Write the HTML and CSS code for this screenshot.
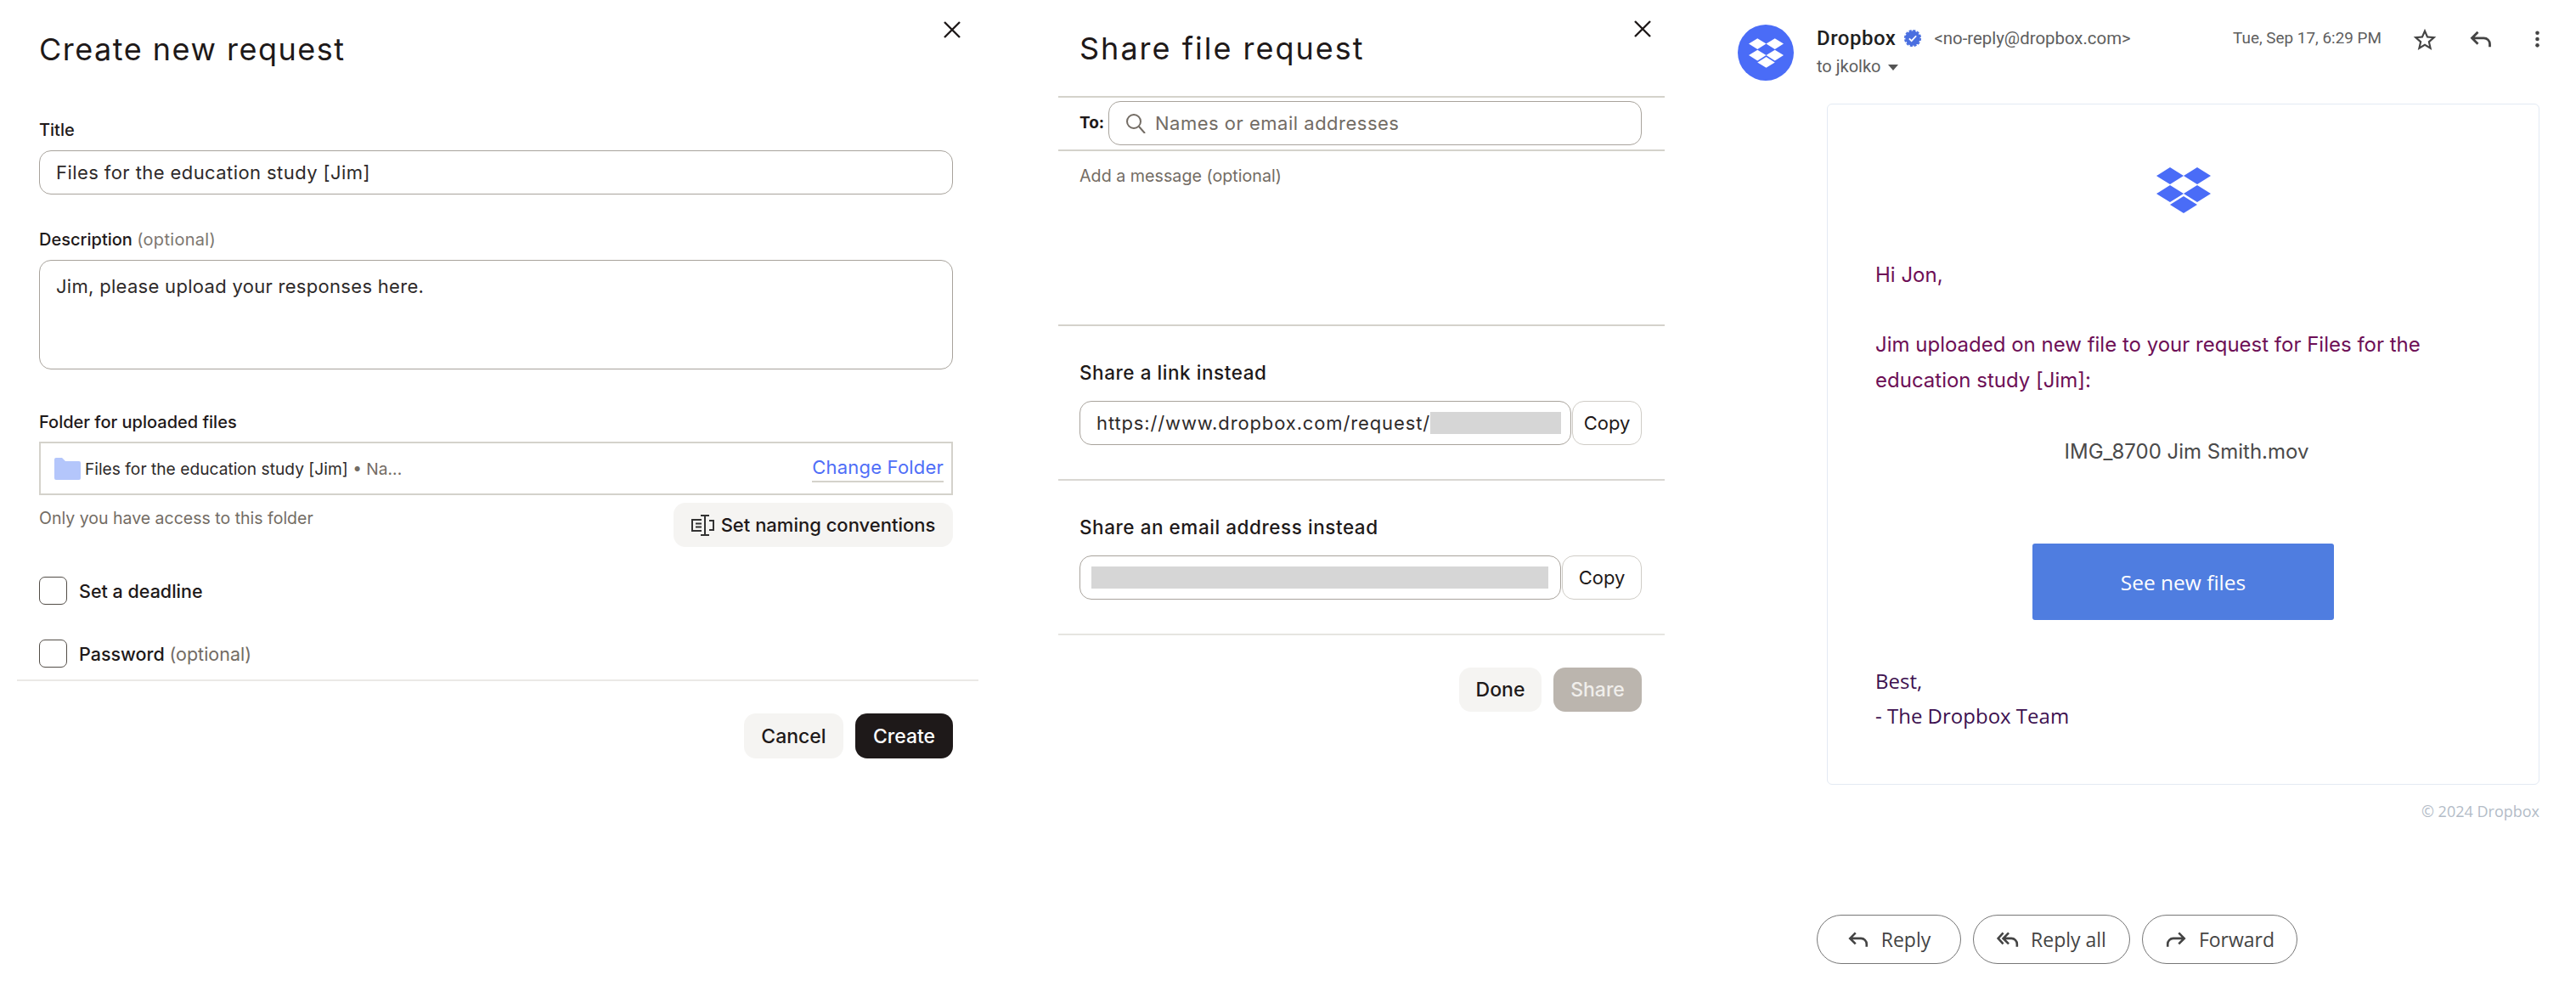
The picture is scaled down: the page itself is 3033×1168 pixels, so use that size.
FILE: index.html

```html
<!DOCTYPE html>
<html lang="en">
<head>
    <meta charset="UTF-8">
    <title>Dropbox file request</title>
    <link rel="stylesheet" href="styles.css">
</head>
<body>
    <div class="page">
        <!-- create request dialog -->
        <section class="create">
            <svg class="close close-create" viewBox="0 0 20 20"><path d="M1 1 19 19M19 1 1 19"/></svg>
            <h2 class="dialog-title">Create new request</h2>

            <div class="label label-title">Title</div>
            <div class="box box-title">Files for the education study [Jim]</div>

            <div class="label label-desc">Description <span class="opt">(optional)</span></div>
            <div class="box box-desc">Jim, please upload your responses here.</div>

            <div class="label label-folder">Folder for uploaded files</div>
            <div class="folder">
                <svg class="folder-icon" viewBox="0 0 31 26"><path d="M0 2a2 2 0 0 1 2-2h7l4 4h16a2 2 0 0 1 2 2v18a2 2 0 0 1-2 2H2a2 2 0 0 1-2-2z"/></svg>
                <span class="folder-name">Files for the education study [Jim] <span class="folder-path">• Na...</span></span>
                <span class="change">Change Folder</span>
            </div>
            <div class="folder-row">
                <span class="hint">Only you have access to this folder</span>
                <div class="btn btn-naming">
                    <svg class="naming-icon" viewBox="0 0 27 25"><path d="M12 6H1v13h11M5 10.500h7M5 14.500h7M11 1h10M11 24h10M16 1v23M21 7h5v11h-5"/></svg>
                    Set naming conventions
                </div>
            </div>
            <div class="check check-first"><span class="tick"></span>Set a deadline</div>
            <div class="check check-second"><span class="tick"></span><span>Password <span class="opt-dark">(optional)</span></span></div>
            <div class="rule-create"></div>
            <div class="actions actions-create">
                <div class="btn btn-soft btn-cancel">Cancel</div>
                <div class="btn btn-dark">Create</div>
            </div>
        </section>

        <!-- share dialog -->
        <section class="share">
            <svg class="close close-share" viewBox="0 0 20 20"><path d="M1 1 19 19M19 1 1 19"/></svg>
            <h2 class="dialog-title share-title">Share file request</h2>
            <div class="to-row">
                <span class="to">To:</span>
                <div class="to-input">
                    <svg class="search" viewBox="0 0 24 24"><circle cx="10" cy="10" r="8"/><path d="M16 16l7 8"/></svg>
                    Names or email addresses
                </div>
            </div>
            <div class="message">Add a message (optional)</div>
            <div class="share-block">
                <div class="share-head">Share a link instead</div>
                <div class="copy-row">
                    <div class="copy-field copy-link">https://www.dropbox.com/request/<span class="redact redact-link"></span></div>
                    <div class="copy-btn copy-btn-link">Copy</div>
                </div>
            </div>
            <div class="share-block share-block-last">
                <div class="share-head">Share an email address instead</div>
                <div class="copy-row">
                    <div class="copy-field copy-mail"><span class="redact redact-mail"></span></div>
                    <div class="copy-btn copy-btn-mail">Copy</div>
                </div>
            </div>
            <div class="actions actions-share">
                <div class="btn btn-soft btn-done">Done</div>
                <div class="btn btn-off">Share</div>
            </div>
        </section>

        <!-- notification email -->
        <section class="mail">
            <div class="mail-head">
                <div class="avatar">
                    <svg class="avatar-logo" viewBox="0 0 64 54"><path d="M0 10 16 0l16 10-16 10zM32 10 48 0l16 10-16 10zM0 31l16-10 16 10-16 10zM32 31l16-10 16 10-16 10z"/><path class="avatar-foot" d="M16 44l16-10 16 10-16 10z"/></svg>
                </div>
                <div class="meta">
                    <div class="meta-top">
                        <span class="sender">Dropbox</span>
                        <svg class="badge" viewBox="0 0 24 24"><circle class="badge-fill" cx="12" cy="12" r="9.500"/><circle class="badge-edge" cx="12" cy="12" r="10" stroke-dasharray="3.400 1.840"/><path class="badge-check" d="M7.500 12.500l3 3 6-6.500"/></svg>
                        <span class="address">&lt;no-reply@dropbox.com&gt;</span>
                    </div>
                    <div class="meta-to">to jkolko <span class="caret"></span></div>
                </div>
                <div class="tools">
                    <span class="date">Tue, Sep 17, 6:29 PM</span>
                    <svg class="tool tool-star" viewBox="0 0 24 24"><path d="M22 9.240l-7.190-.62L12 2 9.190 8.630 2 9.240l5.460 4.730L5.820 21 12 17.270 18.180 21l-1.630-7.030L22 9.240zM12 15.400l-3.760 2.270 1-4.280-3.320-2.880 4.380-.38L12 6.100l1.710 4.040 4.380.38-3.320 2.880 1 4.280L12 15.400z"/></svg>
                    <svg class="tool tool-reply line-icon" viewBox="0 0 24 24"><path d="M9 5 3 11l6 6M3 11h12a6 6 0 0 1 6 6v3"/></svg>
                    <svg class="tool tool-more" viewBox="0 0 6 24"><circle cx="3" cy="4" r="2.500"/><circle cx="3" cy="12" r="2.500"/><circle cx="3" cy="20" r="2.500"/></svg>
                </div>
            </div>

            <div class="card">
                <svg class="card-logo" viewBox="0 0 64 54"><path d="M0 10 16 0l16 10-16 10zM32 10 48 0l16 10-16 10zM0 31l16-10 16 10-16 10zM32 31l16-10 16 10-16 10z"/><path class="logo-foot" d="M16 44l16-10 16 10-16 10z"/></svg>
                <p class="mail-text hi">Hi Jon,</p>
                <p class="mail-text body-text">Jim uploaded on new file to your request for Files for the education study [Jim]:</p>
                <p class="file-name">IMG_8700 Jim Smith.mov</p>
                <div class="cta">See new files</div>
                <p class="sign">Best,<br>- The Dropbox Team</p>
            </div>
            <div class="copyright">© 2024 Dropbox</div>

            <div class="replies">
                <div class="reply reply-one">
                    <svg class="reply-icon line-icon" viewBox="0 0 24 24"><path d="M9 5 3 11l6 6M3 11h12a6 6 0 0 1 6 6v3"/></svg>
                    Reply
                </div>
                <div class="reply reply-all">
                    <svg class="reply-icon line-icon" viewBox="0 0 24 24"><path d="M7 5 1.500 11 7 17M13 5l-6 6 6 6M7 11h9a6 6 0 0 1 6 6v3"/></svg>
                    Reply all
                </div>
                <div class="reply reply-fwd">
                    <svg class="reply-icon line-icon" viewBox="0 0 24 24"><path d="M15 5l6 6-6 6M21 11H9a6 6 0 0 0-6 6v3"/></svg>
                    Forward
                </div>
            </div>
        </section>
    </div>
</body>
</html>
```

FILE: styles.css

```css
* {
    box-sizing: border-box;
}
body {
    margin: 0;
    background: #fff;
    color: #1e1919;
    font-family: 'Inter', sans-serif;
}
p, h2 {
    margin: 0;
}
.page {
    display: flex;
    width: 3033px;
    height: 1168px;
    overflow: hidden;
}

/* shared dialog parts */
.dialog-title {
    font-size: 36px;
    line-height: 44px;
    font-weight: 400;
    letter-spacing: 1.5px;
}
.close {
    position: absolute;
    width: 20px;
    height: 20px;
    fill: none;
    stroke: #1e1919;
    stroke-width: 2.4;
}
.btn {
    display: flex;
    align-items: center;
    justify-content: center;
    font-size: 23px;
    font-weight: 500;
    border-radius: 14px;
}
.btn-soft {
    background: #f5f4f2;
}
.actions {
    display: flex;
    justify-content: flex-end;
}

/* left dialog */
.create {
    position: relative;
    width: 1246px;
    padding: 36px 124px 0 46px;
}
.close-create {
    left: 1111px;
    top: 25px;
}
.label {
    font-size: 20px;
    line-height: 20px;
    font-weight: 500;
}
.label-title {
    margin-top: 63px;
}
.label-desc {
    margin-top: 43px;
}
.label-folder {
    margin-top: 52px;
}
.opt {
    color: #7c7670;
    font-weight: 400;
    letter-spacing: 0.3px;
}
.box {
    margin-top: 14px;
    border: 1.500px solid #a8a39c;
    border-radius: 14px;
    padding: 0 19px;
    font-size: 22px;
    letter-spacing: 0.3px;
    color: #2e2a2a;
}
.box-title {
    height: 52px;
    line-height: 51px;
    letter-spacing: 0.42px;
}
.box-desc {
    height: 129px;
    line-height: 34px;
    padding-top: 13px;
}
.folder {
    display: flex;
    align-items: center;
    height: 63px;
    margin-top: 13px;
    padding: 0 9px 0 16px;
    border: 2px solid #d4d2cb;
}
.folder-icon {
    width: 31px;
    height: 26px;
    fill: #b4c6fb;
    margin-right: 5px;
}
.folder-name {
    font-size: 19.200px;
    color: #2e2a2a;
}
.folder-path {
    color: #736c64;
}
.change {
    margin-left: auto;
    margin-top: 2px;
    padding-bottom: 3px;
    border-bottom: 2px solid #d4d2cb;
    font-size: 22px;
    letter-spacing: 0.2px;
    color: #4f6ef7;
}
.folder-row {
    display: flex;
    justify-content: space-between;
    align-items: flex-start;
    margin-top: 9px;
}
.hint {
    font-size: 19.500px;
    line-height: 36px;
    color: #736c64;
}
.btn-naming {
    width: 329px;
    height: 52px;
    gap: 8px;
    font-size: 22px;
    background: #f5f4f2;
}
.naming-icon {
    width: 27px;
    height: 25px;
    fill: none;
    stroke: #333;
    stroke-width: 2;
}
.check {
    display: flex;
    align-items: center;
    height: 33px;
    gap: 14px;
    font-size: 21.500px;
    font-weight: 500;
}
.check-first {
    margin-top: 35px;
}
.check-second {
    margin-top: 41px;
}
.tick {
    width: 33px;
    height: 33px;
    border: 1.500px solid #524d47;
    border-radius: 7px;
}
.opt-dark {
    color: #736c64;
    font-weight: 400;
}
.rule-create {
    height: 2px;
    margin: 14px -30px 0 -26px;
    background: #ebe9e6;
}
.actions-create {
    gap: 14px;
    margin-top: 38px;
}
.btn-cancel {
    width: 117px;
    height: 53px;
}
.btn-dark {
    width: 115px;
    height: 53px;
    background: #1e1919;
    color: #fff;
}

/* middle dialog */
.share {
    position: relative;
    width: 714px;
    padding-top: 35px;
}
.close-share {
    left: 678px;
    top: 24px;
}
.share-title {
    padding-left: 25px;
    letter-spacing: 2px;
}
.to-row {
    display: flex;
    align-items: center;
    height: 65px;
    margin-top: 34px;
    padding: 0 0 2px 25px;
    border-top: 2px solid #d4d2cb;
    border-bottom: 2px solid #d4d2cb;
}
.to {
    width: 34px;
    font-size: 19px;
    font-weight: 700;
}
.to-input {
    display: flex;
    align-items: center;
    gap: 11px;
    width: 628px;
    height: 52px;
    padding-left: 19px;
    border: 1.500px solid #a8a39c;
    border-radius: 14px;
    font-size: 22px;
    letter-spacing: 0.5px;
    color: #736c64;
}
.search {
    width: 24px;
    height: 24px;
    fill: none;
    stroke: #736c64;
    stroke-width: 2;
}
.message {
    height: 204px;
    padding: 17px 0 0 25px;
    font-size: 19.700px;
    line-height: 24px;
    color: #736c64;
}
.share-block {
    height: 182px;
    padding: 44px 27px 0 25px;
    border-top: 2px solid #d4d2cb;
}
.share-block-last {
    height: 184px;
    border-top: 2px solid #d9d7d2;
    border-bottom: 2px solid #e6e5e1;
}
.share-head {
    font-size: 22.500px;
    line-height: 22px;
    font-weight: 500;
    letter-spacing: 0.55px;
}
.copy-row {
    display: flex;
    margin-top: 22px;
}
.copy-field {
    display: flex;
    align-items: center;
    height: 52px;
    border: 1.500px solid #a8a39c;
    border-radius: 14px;
    font-size: 22px;
    letter-spacing: 0.87px;
    color: #2e2a2a;
}
.copy-link {
    width: 579px;
    padding-left: 19px;
}
.copy-mail {
    width: 567px;
    padding-left: 13px;
}
.redact {
    display: block;
    height: 26px;
    background: #d6d6d6;
}
.redact-link {
    width: 154px;
}
.redact-mail {
    width: 538px;
}
.copy-btn {
    display: flex;
    align-items: center;
    justify-content: center;
    height: 52px;
    margin-left: 1px;
    border: 1px solid #cfccc6;
    border-radius: 14px;
    font-size: 22px;
}
.copy-btn-link {
    width: 82px;
}
.copy-btn-mail {
    width: 94px;
}
.actions-share {
    gap: 14px;
    margin-top: 38px;
    padding-right: 27px;
}
.btn-done {
    width: 97px;
    height: 52px;
}
.btn-off {
    width: 104px;
    height: 52px;
    background: #bbb5ae;
    color: #f0eeeb;
}

/* email column */
.mail {
    width: 1073px;
    padding: 29px 0 0 86px;
    font-family: 'Roboto', sans-serif;
}
.mail-head {
    display: flex;
    height: 66px;
}
.avatar {
    display: flex;
    align-items: center;
    justify-content: center;
    width: 66px;
    height: 66px;
    border-radius: 50%;
    background: #4a6cf7;
}
.avatar-logo {
    width: 41px;
    height: 35px;
    fill: #fff;
}
.avatar-foot {
    stroke: #4a6cf7;
    stroke-width: 2;
    paint-order: stroke;
}
.meta {
    margin-left: 27px;
    padding-top: 5px;
}
.meta-top {
    display: flex;
    align-items: center;
    height: 22px;
}
.sender {
    font-size: 24px;
    font-weight: 500;
    letter-spacing: 0.5px;
    color: #1f1f1f;
}
.badge {
    width: 22px;
    height: 22px;
    margin-left: 9px;
}
.badge-fill {
    fill: #4a6fe0;
}
.badge-edge {
    fill: none;
    stroke: #4a6fe0;
    stroke-width: 2;
}
.badge-check {
    fill: none;
    stroke: #fff;
    stroke-width: 2;
}
.address {
    margin-left: 14px;
    font-size: 20.400px;
    color: #5e5e5e;
}
.meta-to {
    display: flex;
    align-items: center;
    gap: 9px;
    height: 22px;
    margin-top: 11px;
    font-size: 20px;
    color: #5e5e5e;
}
.caret {
    width: 0;
    height: 0;
    margin-top: 2px;
    border-left: 6px solid transparent;
    border-right: 6px solid transparent;
    border-top: 7px solid #555;
}
.tools {
    display: flex;
    align-items: flex-start;
    margin-left: auto;
    margin-right: 42px;
}
.date {
    margin-top: 5px;
    font-size: 18.900px;
    line-height: 22px;
    color: #5e5e5e;
}
.tool {
    fill: #444;
}
.tool-star {
    width: 32px;
    height: 32px;
    margin: 2px 0 0 35px;
}
.tool-reply {
    width: 28px;
    height: 28px;
    margin: 3px 0 0 36px;
}
.line-icon {
    fill: none;
    stroke: #444;
    stroke-width: 2.400;
}
.tool-more {
    width: 7px;
    height: 22px;
    margin: 6px 0 0 49px;
}
.card {
    display: flex;
    flex-direction: column;
    width: 839px;
    height: 802px;
    margin: 27px 0 0 105px;
    padding: 74px 56px 0;
    border: 1px solid #e3eaf3;
    border-radius: 6px;
}
.card-logo {
    width: 64px;
    height: 54px;
    flex: none;
    align-self: center;
    fill: #4a6cf7;
}
.logo-foot {
    stroke: #fff;
    stroke-width: 1.500;
    paint-order: stroke;
}
.mail-text {
    font-family: 'Inter', sans-serif;
    font-size: 24px;
    line-height: 42px;
    color: #6d0f56;
}
.hi {
    margin-top: 52px;
}
.body-text {
    margin-top: 40px;
}
.file-name {
    margin-top: 42px;
    padding-left: 8px;
    text-align: center;
    font-family: 'Inter', sans-serif;
    font-size: 24px;
    line-height: 42px;
    color: #4a4a4a;
}
.cta {
    display: flex;
    align-items: center;
    justify-content: center;
    width: 355px;
    height: 90px;
    margin-top: 87px;
    align-self: center;
    border-radius: 3px;
    background: #4f7de0;
    color: #fff;
    font-family: 'Open Sans', sans-serif;
    font-size: 24.500px;
}
.sign {
    margin-top: 51px;
    font-family: 'Open Sans', sans-serif;
    font-size: 24px;
    line-height: 41px;
    color: #3d1150;
}
.copyright {
    width: 839px;
    margin: 21px 0 0 105px;
    text-align: right;
    font-family: 'Open Sans', sans-serif;
    font-size: 18px;
    line-height: 20px;
    color: #b3bcc7;
}
.replies {
    display: flex;
    gap: 14px;
    margin: 112px 0 0 93px;
}
.reply {
    display: flex;
    align-items: center;
    justify-content: center;
    gap: 14px;
    height: 58px;
    border: 1.500px solid #777;
    border-radius: 29px;
    font-family: 'Open Sans', sans-serif;
    font-size: 23px;
    color: #444;
}
.reply-one {
    width: 170px;
}
.reply-all {
    width: 185px;
}
.reply-fwd {
    width: 183px;
}
.reply-icon {
    width: 26px;
    height: 26px;
}
```
